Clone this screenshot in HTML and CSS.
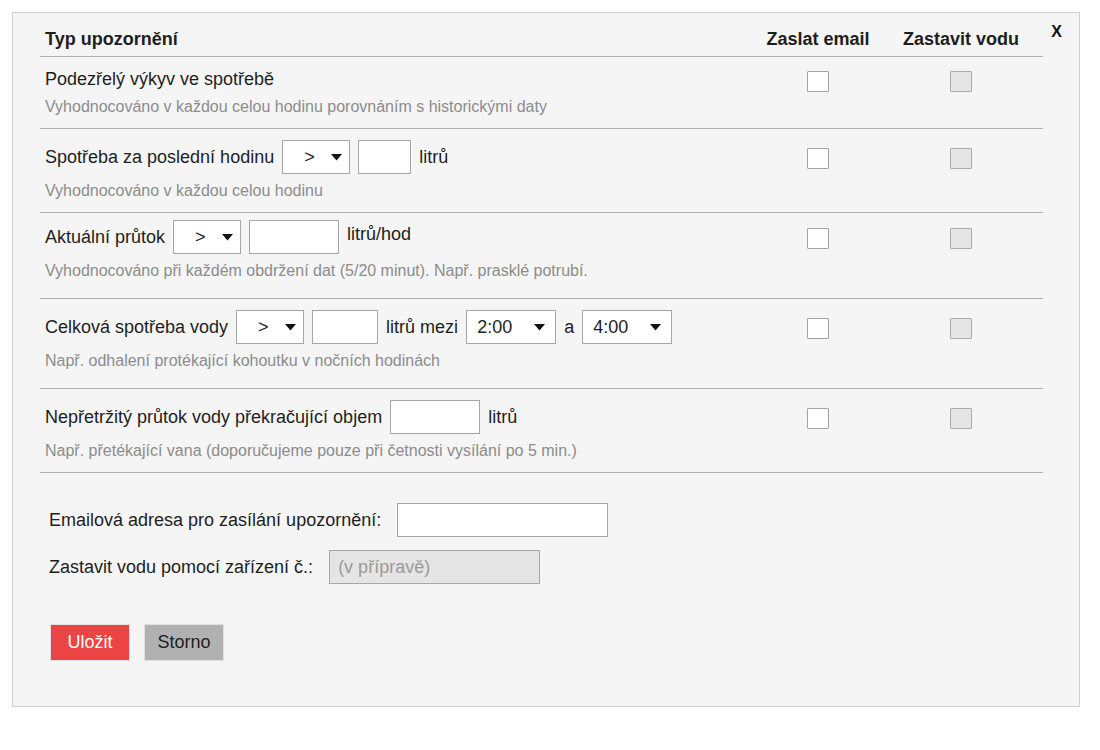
FILE: index.html
```html
<!DOCTYPE html>
<html lang="cs">
<head>
  <meta charset="UTF-8" />
  <meta name="viewport" content="width=device-width, initial-scale=1.0"/>
  <title>Nastavení upozornění</title>
  <link rel="stylesheet" href="styles.css">
</head>
<body>
  <div class="panel">
    <button class="close" type="button">X</button>

    <div class="alerts">
      <div class="alert-head">
        <div class="col-type">Typ upozornění</div>
        <div class="col-check">Zaslat email</div>
        <div class="col-check">Zastavit vodu</div>
      </div>

      <div class="alert-row">
        <div class="alert-main">
          <div class="alert-line alert-line-text">Podezřelý výkyv ve spotřebě</div>
          <div class="alert-desc">Vyhodnocováno v každou celou hodinu porovnáním s historickými daty</div>
        </div>
        <div class="col-check"><input type="checkbox" class="check"></div>
        <div class="col-check"><input type="checkbox" class="check" disabled></div>
      </div>

      <div class="alert-row">
        <div class="alert-main">
          <div class="alert-line">
            <span>Spotřeba za poslední hodinu</span>
            <div class="select select-op"><span>&gt;</span><svg width="11" height="7" viewBox="0 0 11 7"><path d="M0 0H11L5.5 6.5Z"/></svg></div>
            <input type="text" class="field field-s">
            <span>litrů</span>
          </div>
          <div class="alert-desc">Vyhodnocováno v každou celou hodinu</div>
        </div>
        <div class="col-check"><input type="checkbox" class="check"></div>
        <div class="col-check"><input type="checkbox" class="check" disabled></div>
      </div>

      <div class="alert-row alert-row-flow">
        <div class="alert-main">
          <div class="alert-line">
            <span>Aktuální průtok</span>
            <div class="select select-op"><span>&gt;</span><svg width="11" height="7" viewBox="0 0 11 7"><path d="M0 0H11L5.5 6.5Z"/></svg></div>
            <input type="text" class="field field-l">
            <span class="unit-high">litrů/hod</span>
          </div>
          <div class="alert-desc">Vyhodnocováno při každém obdržení dat (5/20 minut). Např. prasklé potrubí.</div>
        </div>
        <div class="col-check"><input type="checkbox" class="check"></div>
        <div class="col-check"><input type="checkbox" class="check" disabled></div>
      </div>

      <div class="alert-row alert-row-total">
        <div class="alert-main">
          <div class="alert-line">
            <span>Celková spotřeba vody</span>
            <div class="select select-op"><span>&gt;</span><svg width="11" height="7" viewBox="0 0 11 7"><path d="M0 0H11L5.5 6.5Z"/></svg></div>
            <input type="text" class="field field-m">
            <span>litrů mezi</span>
            <div class="select select-time"><span>2:00</span><svg width="11" height="7" viewBox="0 0 11 7"><path d="M0 0H11L5.5 6.5Z"/></svg></div>
            <span>a</span>
            <div class="select select-time"><span>4:00</span><svg width="11" height="7" viewBox="0 0 11 7"><path d="M0 0H11L5.5 6.5Z"/></svg></div>
          </div>
          <div class="alert-desc">Např. odhalení protékající kohoutku v nočních hodinách</div>
        </div>
        <div class="col-check"><input type="checkbox" class="check"></div>
        <div class="col-check"><input type="checkbox" class="check" disabled></div>
      </div>

      <div class="alert-row">
        <div class="alert-main">
          <div class="alert-line">
            <span>Nepřetržitý průtok vody překračující objem</span>
            <input type="text" class="field field-l">
            <span>litrů</span>
          </div>
          <div class="alert-desc">Např. přetékající vana (doporučujeme pouze při četnosti vysílání po 5 min.)</div>
        </div>
        <div class="col-check"><input type="checkbox" class="check"></div>
        <div class="col-check"><input type="checkbox" class="check" disabled></div>
      </div>
    </div>

    <div class="settings">
      <label class="setting">Emailová adresa pro zasílání upozornění:<input type="text" class="field field-email"></label>
      <label class="setting">Zastavit vodu pomocí zařízení č.:<input type="text" class="field field-device" placeholder="(v přípravě)" disabled></label>
    </div>

    <div class="actions">
      <button class="btn btn-save" type="button">Uložit</button>
      <button class="btn btn-cancel" type="button">Storno</button>
    </div>
  </div>
</body>
</html>
```

FILE: styles.css
```css
:root {
  --bg: #f5f5f5;
  --text: #1e1e1e;
  --muted: #8c8c8c;
  --line: #adadad;
  --input-border: #a6a6a6;
  --disabled: #e5e5e5;
  --save: #ec4444;
  --cancel: #b1b1b1;
}

* {
  box-sizing: border-box;
}

body {
  margin: 0;
  padding: 12px 20px 12px 12px;
  background: #fff;
  font-family: "Liberation Sans", Arial, sans-serif;
  font-size: 18px;
  color: var(--text);
}

.panel {
  position: relative;
  background: var(--bg);
  border: 1px solid #cfcfcf;
  padding: 15px 36px 45px 27px;
}

.close {
  position: absolute;
  top: 10px;
  right: 17px;
  padding: 0;
  border: none;
  background: none;
  font-family: "Liberation Sans", Arial, sans-serif;
  font-size: 16px;
  font-weight: bold;
  line-height: 18px;
  color: #111;
}

.alert-head,
.alert-row {
  display: grid;
  grid-template-columns: 1fr 122px 164px;
  border-bottom: 1px solid var(--line);
}

.alert-head {
  font-weight: bold;
  line-height: 22px;
  padding-bottom: 6px;
}

.col-type {
  padding-left: 5px;
}

.col-check {
  text-align: center;
}

.alert-row {
  padding: 11px 0 11px;
}

.alert-row-flow {
  padding: 7px 0 17px;
}

.alert-row-total {
  padding: 11px 0 17px;
}

.alert-main {
  padding-left: 5px;
}

.alert-line {
  display: flex;
  align-items: center;
  gap: 8px;
  height: 34px;
  white-space: nowrap;
}

.alert-line-text {
  height: 22px;
}

.unit-high {
  margin-top: -6px;
}

.alert-desc {
  margin-top: 7px;
  font-size: 16px;
  line-height: 20px;
  color: var(--muted);
}

.alert-row .col-check {
  padding-top: 8px;
}

.alert-head + .alert-row .col-check {
  padding-top: 3px;
}

.check {
  appearance: none;
  -webkit-appearance: none;
  width: 22px;
  height: 21px;
  margin: 0;
  background: #fff;
  border: 1px solid #a3a3a3;
  border-radius: 1px;
}

.check:disabled {
  background: var(--disabled);
  border-color: #ababab;
}

.select {
  display: flex;
  align-items: center;
  justify-content: space-between;
  height: 34px;
  background: #fff;
  border: 1px solid var(--input-border);
}

.select svg path {
  fill: #111;
}

.select-op {
  width: 68px;
  padding: 0 7px 0 21px;
}

.select-time {
  width: 90px;
  padding: 0 10px 0 10px;
}

.field {
  height: 34px;
  margin: 0;
  padding: 0 8px;
  background: #fff;
  border: 1px solid var(--input-border);
  border-radius: 0;
  font-family: inherit;
  font-size: 18px;
  color: var(--text);
}

.field-s {
  width: 53px;
}

.field-m {
  width: 66px;
}

.field-l {
  width: 90px;
}

.field-email {
  width: 211px;
}

.field-device {
  width: 211px;
  background: var(--disabled);
}

.field-device::placeholder {
  color: #9a9a9a;
}

.settings {
  display: flex;
  flex-direction: column;
  gap: 13px;
  padding: 30px 0 0 9px;
}

.setting {
  display: flex;
  align-items: center;
  gap: 16px;
}

.actions {
  display: flex;
  gap: 14px;
  padding: 40px 0 0 10px;
}

.btn {
  width: 80px;
  height: 37px;
  padding: 0;
  border: 1px solid #e0e0e0;
  font-family: inherit;
  font-size: 18px;
}

.btn-save {
  background: var(--save);
  color: #fff;
}

.btn-cancel {
  background: var(--cancel);
  color: #1e1e1e;
}
```
